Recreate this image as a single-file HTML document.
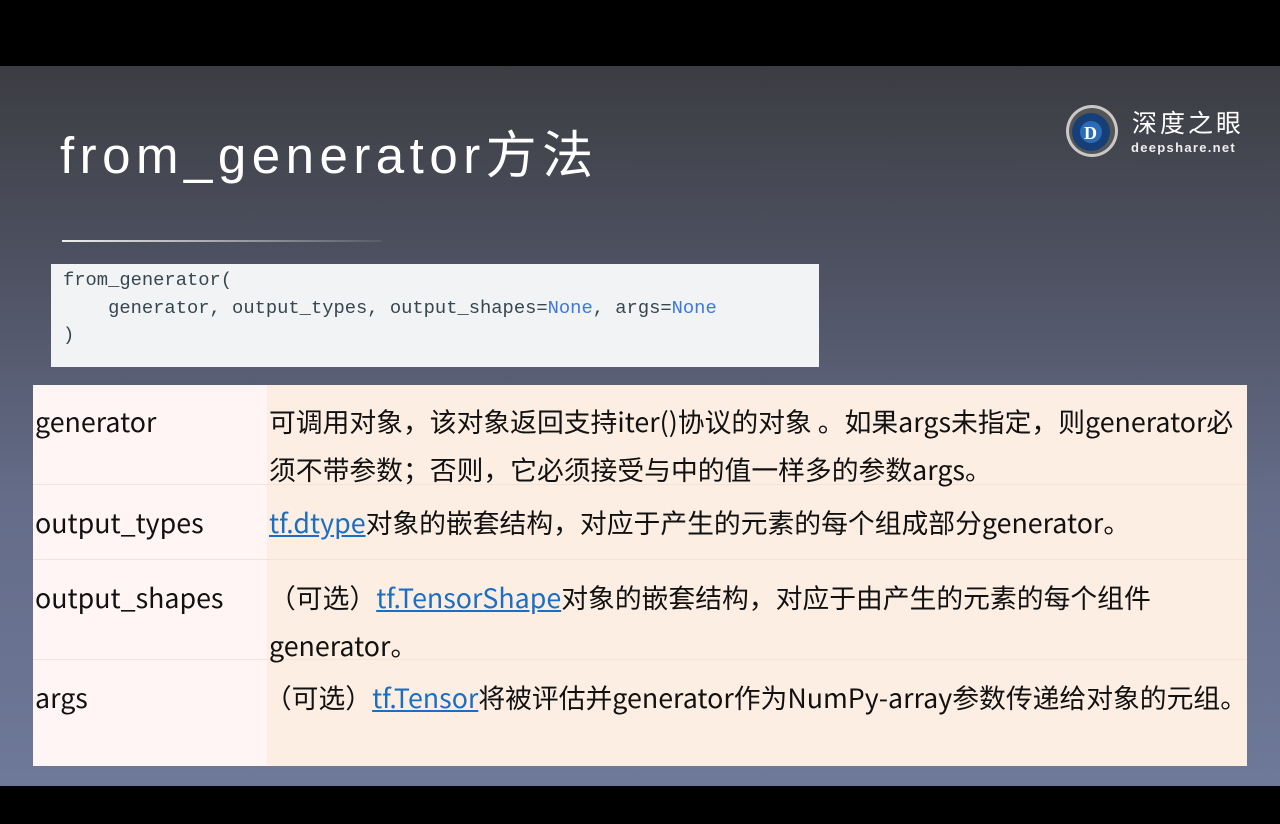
<!DOCTYPE html>
<html><head><meta charset="utf-8"><style>
*{margin:0;padding:0;box-sizing:border-box}
body{width:1280px;height:824px;overflow:hidden;background:#000;position:relative;font-family:"Liberation Sans","Noto Sans CJK SC",sans-serif}
.slide{position:absolute;left:0;top:66px;width:1280px;height:720px;background:linear-gradient(180deg,#3c3d42 0%,#4f5364 30%,#646c88 60%,#6e7898 100%)}
.title{position:absolute;left:60px;top:60px;font-size:51px;color:#fff;letter-spacing:5.5px;font-family:"Liberation Sans","Noto Sans CJK SC",sans-serif;line-height:60px}
.rule{position:absolute;left:62px;top:174px;width:320px;height:2px;background:linear-gradient(90deg,#eee,rgba(200,200,210,0.1))}
.code{position:absolute;left:51px;top:198px;width:768px;height:103px;background:#f1f3f4;font-family:"Liberation Mono",monospace;font-size:18.8px;color:#37474f;padding:3px 0 0 12px;line-height:27.5px;white-space:pre}
.code b{font-weight:normal;color:#3b78e7}
.tbl{position:absolute;left:33px;top:319px;width:1214px;height:381px;font-family:"Noto Sans CJK SC",sans-serif;font-size:26.8px;color:#111;background:linear-gradient(90deg,#fff5f4 234px,#fdeee3 234px)}
.row{position:absolute;left:0;width:1214px;display:flex;border-bottom:1px solid #f6e3d8}
.k{width:234px;padding-left:2px;height:100%;line-height:48px}
.v{flex:1;padding-left:2px;height:100%;line-height:48px;white-space:nowrap}
a{color:#1a6fc4;text-decoration:underline}
.logo{position:absolute;left:1065px;top:38px}
.lt{position:absolute;left:1132px;top:38px;color:#fff;font-size:25px;letter-spacing:3px;font-family:"Noto Sans CJK SC",sans-serif}
.ls{position:absolute;left:1131px;top:74px;color:#eee;font-size:13px;letter-spacing:1.3px;font-weight:bold}
</style></head><body>
<div class="slide">
<svg class="logo" width="54" height="54" viewBox="0 0 54 54"><circle cx="27" cy="27" r="26" fill="#c8c8c8"/><circle cx="27" cy="27" r="23" fill="#555"/><circle cx="26" cy="28" r="19" fill="#163f78"/><circle cx="26" cy="28" r="11" fill="#2a6cb8"/><text x="19" y="35" font-size="18" font-weight="bold" fill="#fff" font-family="Liberation Serif,serif">D</text></svg>
<div class="lt">深度之眼</div>
<div class="ls">deepshare.net</div>
<div class="title">from_generator方法</div>
<div class="rule"></div>
<div class="code">from_generator(
    generator, output_types, output_shapes=<b>None</b>, args=<b>None</b>
)</div>
<div class="tbl">
<div class="row" style="top:0;height:100px"><div class="k" style="padding-top:12px">generator</div><div class="v" style="padding-top:12px">可调用对象，该对象返回支持iter()协议的对象 。如果args未指定，则generator必<br>须不带参数；否则，它必须接受与中的值一样多的参数args。</div></div>
<div class="row" style="top:100px;height:75px"><div class="k" style="padding-top:13px">output_types</div><div class="v" style="padding-top:13px"><a>tf.dtype</a>对象的嵌套结构，对应于产生的元素的每个组成部分generator。</div></div>
<div class="row" style="top:175px;height:100px"><div class="k" style="padding-top:13px">output_shapes</div><div class="v" style="padding-top:13px">（可选）<a>tf.TensorShape</a>对象的嵌套结构，对应于由产生的元素的每个组件<br>generator。</div></div>
<div class="row" style="top:275px;height:106px;border:none"><div class="k" style="padding-top:13px">args</div><div class="v" style="padding-top:13px">（可选）<a>tf.Tensor</a>将被评估并generator作为NumPy-array参数传递给对象的元组。</div></div>
</div>
</div>
</body></html>
